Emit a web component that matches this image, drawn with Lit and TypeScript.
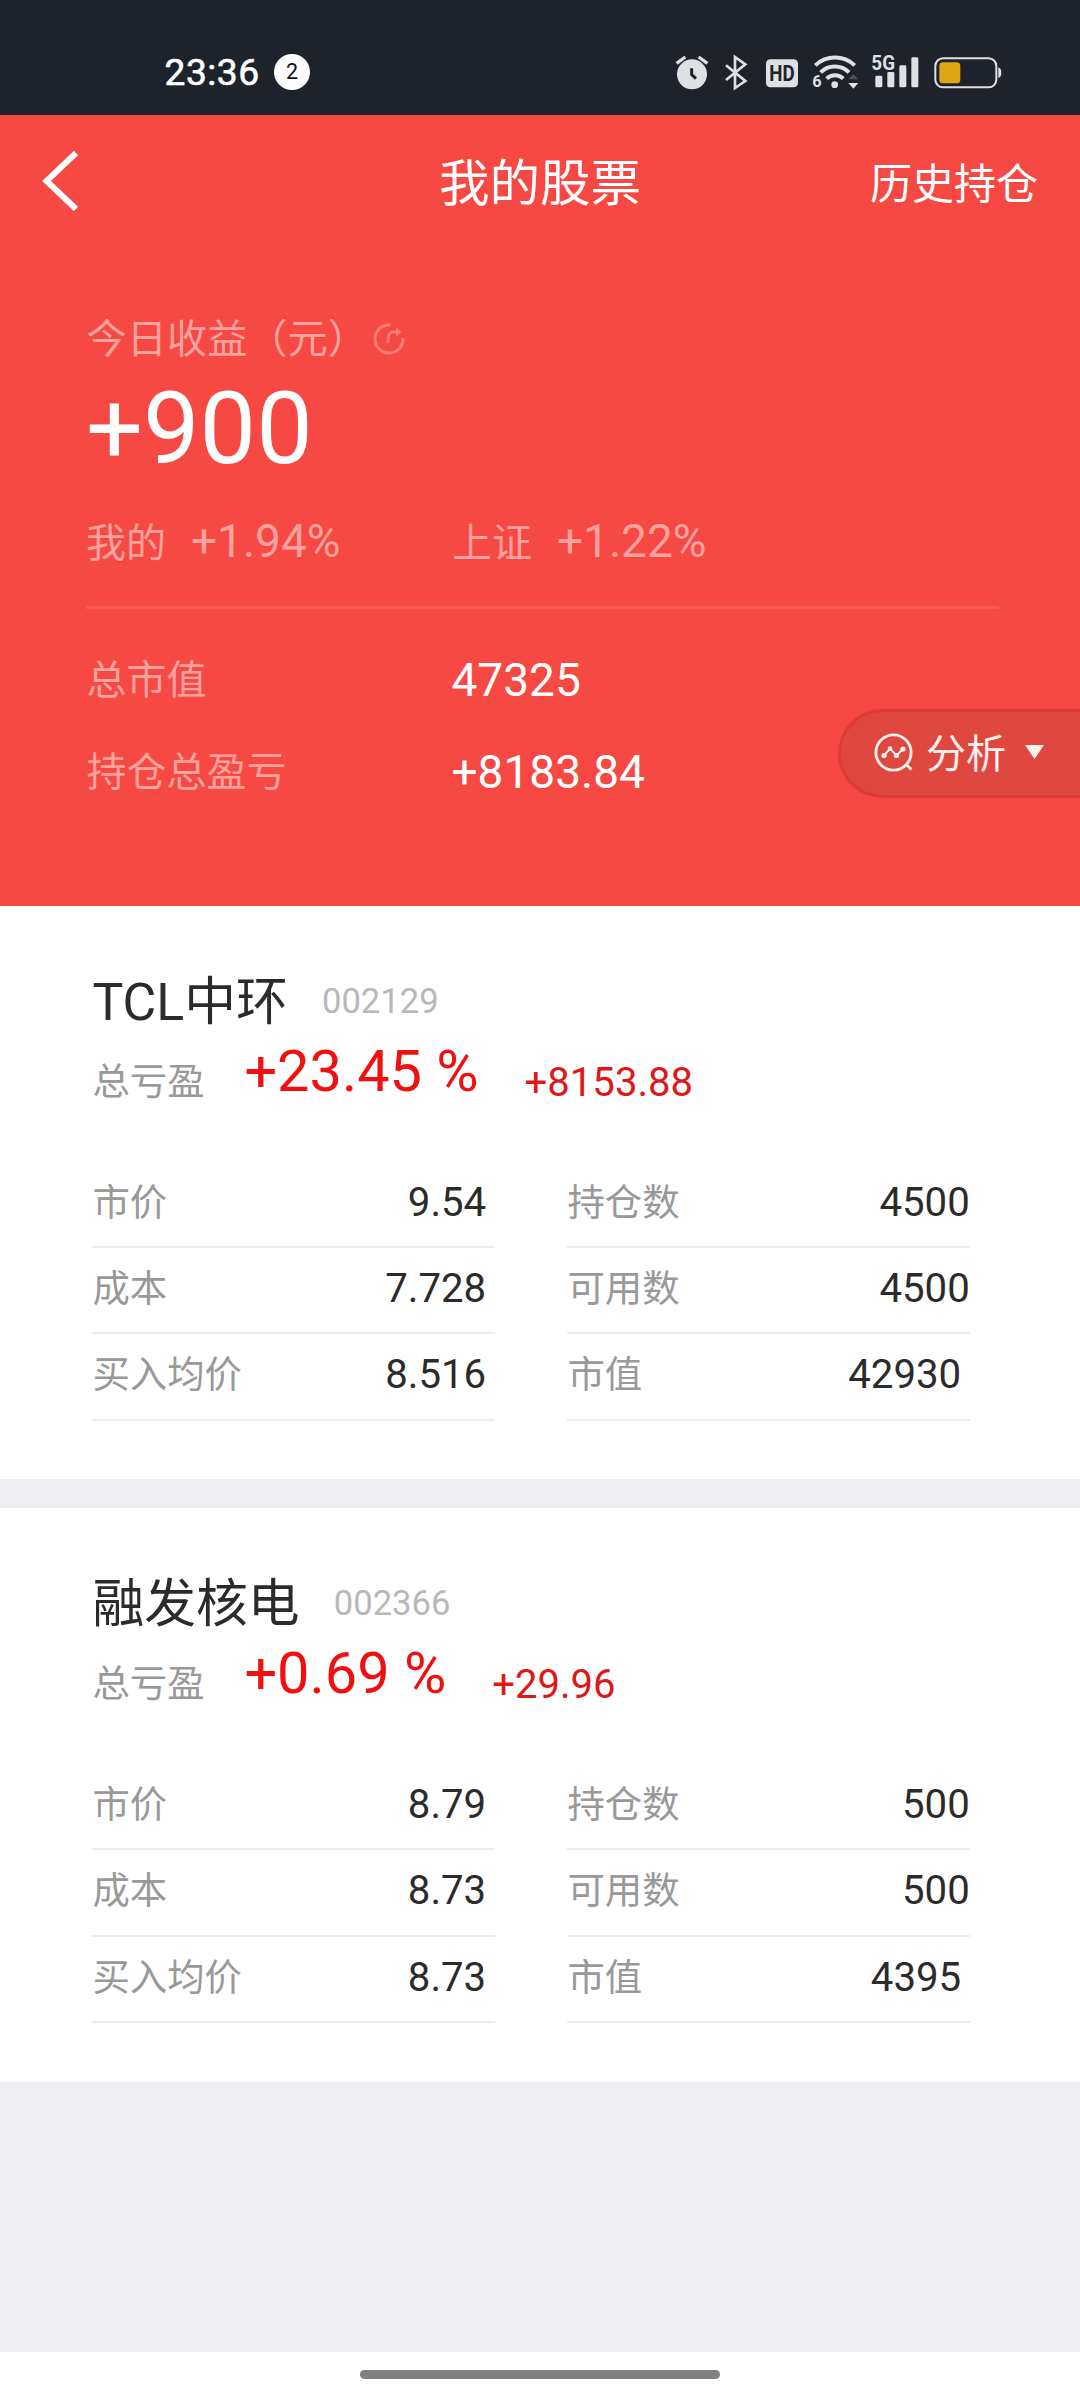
import { LitElement, html, css, svg } from "lit";
import { customElement, property } from "lit/decorators.js";

interface Cell {
  label: string;
  value: string;
}

interface Holding {
  name: string;
  code: string;
  percent: string;
  amount: string;
  left: Cell[];
  right: Cell[];
}

const HOLDINGS: Holding[] = [
  {
    name: "TCL中环",
    code: "002129",
    percent: "+23.45 %",
    amount: "+8153.88",
    left: [
      { label: "市价", value: "9.54" },
      { label: "成本", value: "7.728" },
      { label: "买入均价", value: "8.516" },
    ],
    right: [
      { label: "持仓数", value: "4500" },
      { label: "可用数", value: "4500" },
      { label: "市值", value: "42930" },
    ],
  },
  {
    name: "融发核电",
    code: "002366",
    percent: "+0.69 %",
    amount: "+29.96",
    left: [
      { label: "市价", value: "8.79" },
      { label: "成本", value: "8.73" },
      { label: "买入均价", value: "8.73" },
    ],
    right: [
      { label: "持仓数", value: "500" },
      { label: "可用数", value: "500" },
      { label: "市值", value: "4395" },
    ],
  },
];

/* Status icons share one 120-unit tall strip, three units to a pixel. */
const strip = (from: number, to: number, body: unknown) => html`<svg
  width=${(to - from) / 3}
  height="40"
  viewBox="${from} 65 ${to - from} 120"
>
  ${body}
</svg>`;

const alarm = svg`
  <circle cx="96" cy="132" r="45" fill="#dfe0e3"/>
  <path d="M50 99 L76 80 M142 99 L116 80" stroke="#dfe0e3" stroke-width="10"/>
  <path d="M95 114 V133 L108 145" fill="none" stroke="#1e222b" stroke-width="9"/>`;

const bluetooth = svg`
  <path d="M199 105 L257 152 L226 173 V80 L257 102 L199 149" fill="none" stroke="#dfe0e3" stroke-width="8"/>`;

const hd = svg`
  <rect x="318" y="87" width="96" height="84" rx="13" fill="#dfe0e3"/>
  <text x="366" y="153" text-anchor="middle" font-family="Roboto, sans-serif" font-weight="700" font-size="66" textLength="76" lengthAdjust="spacingAndGlyphs" fill="#1e222b">HD</text>`;

const wifi = svg`
  <g fill="none" stroke="#dfe0e3" stroke-width="12">
    <path d="M465 105 A86 86 0 0 1 583 105"/>
    <path d="M481 126 A60 60 0 0 1 566 126"/>
    <path d="M499 145 A36 36 0 0 1 549 145"/>
  </g>
  <circle cx="523" cy="163" r="10" fill="#dfe0e3"/>
  <text x="456" y="171" font-family="Roboto, sans-serif" font-weight="700" font-size="52" textLength="28" lengthAdjust="spacingAndGlyphs" fill="#dfe0e3">6</text>
  <path d="M579 132 L594 147 H564 Z" fill="#4a4d56"/>
  <path d="M579 175 L594 158 H564 Z" fill="#dfe0e3"/>`;

const signal = svg`
  <text x="633" y="120" font-family="Roboto, sans-serif" font-weight="700" font-size="62" textLength="71" lengthAdjust="spacingAndGlyphs" fill="#dfe0e3">5G</text>
  <g fill="#dfe0e3">
    <rect x="645" y="136" width="21" height="35" rx="4"/>
    <rect x="681" y="125" width="21" height="46" rx="4"/>
    <rect x="717" y="105" width="21" height="66" rx="4"/>
    <rect x="753" y="81" width="21" height="90" rx="4"/>
  </g>`;

const battery = svg`
  <rect x="825" y="84" width="183" height="87" rx="23" fill="none" stroke="#dfe0e3" stroke-width="6"/>
  <rect x="837" y="96" width="63" height="63" rx="11" fill="#dea517"/>
  <path d="M1014 111 Q1023 114 1023 127 Q1023 140 1014 143 Z" fill="#dfe0e3"/>`;

@customElement("holding-card")
class HoldingCard extends LitElement {
  @property({ attribute: false }) holding!: Holding;

  static styles = css`
    :host {
      display: block;
      background: #fff;
      padding: 60px 110px 58.7px 92.4px;
      font-family: Roboto, "Noto Sans CJK SC", sans-serif;
    }
    .title {
      display: flex;
      align-items: flex-start;
      gap: 34.2px;
      line-height: 70px;
      height: 71px;
    }
    .name {
      padding-top: 1.6px;
      font-size: 51.8px;
      color: #2b2b2b;
    }
    .code {
      font-size: 34.6px;
      color: #b8b8b8;
    }
    .profit {
      display: flex;
      align-items: flex-end;
      margin-top: -1px;
      line-height: 47px;
      white-space: nowrap;
    }
    .profit-label {
      width: 152px;
      font-size: 37.4px;
      color: #999;
    }
    .percent {
      margin-right: 46px;
      font-size: 57.7px;
      line-height: 70px;
      color: #f20f0f;
    }
    .amount {
      font-size: 40.1px;
      color: #e01717;
    }
    .columns {
      display: grid;
      grid-template-columns: 403px 403px;
      column-gap: 72px;
      margin-top: 55.7px;
    }
    .row {
      box-sizing: border-box;
      display: flex;
      align-items: baseline;
      justify-content: space-between;
      height: 86.3px;
      border-bottom: 2px solid #ececec;
      line-height: 82px;
    }
    .label {
      font-size: 37.4px;
      color: #999;
    }
    .value {
      font-size: 40.2px;
      color: #2b2b2b;
    }
    .column.left .value,
    .column.right .row:last-child .value {
      padding-right: 9.2px;
    }
    .column.right .value {
      padding-right: 0.6px;
    }
  `;

  private column(side: string, cells: Cell[]) {
    return html`<div class="column ${side}">
      ${cells.map(
        (c) => html`<div class="row">
          <span class="label">${c.label}</span><span class="value">${c.value}</span>
        </div>`
      )}
    </div>`;
  }

  render() {
    const h = this.holding;
    return html`
      <div class="title"><span class="name">${h.name}</span><span class="code">${h.code}</span></div>
      <div class="profit">
        <span class="profit-label">总亏盈</span><span class="percent">${h.percent}</span
        ><span class="amount">${h.amount}</span>
      </div>
      <div class="columns">${this.column("left", h.left)}${this.column("right", h.right)}</div>
    `;
  }
}

@customElement("app-root")
class AppRoot extends LitElement {
  static styles = css`
    :host {
      display: flex;
      flex-direction: column;
      width: 1080px;
      height: 2400px;
      overflow: hidden;
      background: #efeef3;
      font-family: Roboto, "Noto Sans CJK SC", sans-serif;
    }
    svg {
      display: block;
      flex: none;
    }
    .status {
      box-sizing: border-box;
      display: flex;
      align-items: center;
      height: 115px;
      padding: 28px 76.7px 0 164.5px;
      background: #1e222b;
    }
    .time {
      font-size: 37.2px;
      font-weight: 400;
      letter-spacing: 0.5px;
      -webkit-text-stroke: 0.6px #fff;
      color: #fff;
      width: 109.5px;
      line-height: 40px;
    }
    .count {
      width: 36px;
      height: 36px;
      border-radius: 50%;
      background: #fff;
      color: #111;
      font-size: 21.5px;
      line-height: 36px;
      text-align: center;
    }
    .status-icons {
      display: flex;
      margin-left: auto;
    }
    .hero {
      position: relative;
      height: 791px;
      background: #f64944;
      color: #fff;
    }
    .bar {
      display: grid;
      grid-template-columns: 1fr auto 1fr;
      align-items: center;
      height: 136px;
      padding: 0 42px;
    }
    .back {
      margin-top: -4px;
    }
    .heading {
      margin-top: -9px;
      font-size: 50.5px;
    }
    .history {
      margin-top: -6px;
      font-size: 42px;
      justify-self: end;
    }
    .summary {
      padding: 58px 81px 0 86px;
    }
    .today {
      display: flex;
      align-items: center;
      height: 60px;
      font-size: 40.2px;
      color: #ffa19e;
    }
    .today span {
      margin: -7px 0 0 0.6px;
    }
    .today svg {
      margin-left: 4.5px;
    }
    .gain {
      font-size: 100.6px;
      line-height: 120px;
    }
    .rates {
      display: grid;
      grid-template-columns: 366px auto;
      line-height: 105px;
      height: 105px;
      margin-bottom: 12px;
      color: #ffa19e;
    }
    .rate {
      display: flex;
      align-items: baseline;
      gap: 25px;
      font-size: 40px;
    }
    .rate-value {
      font-size: 46px;
    }
    .totals {
      border-top: 3px solid #f95a56;
      padding-top: 24px;
    }
    .total {
      display: grid;
      grid-template-columns: 365.5px auto;
      align-items: center;
      height: 92px;
      line-height: 88px;
    }
    .total-label {
      padding: 4px 0 0 0.5px;
      font-size: 40px;
      color: #ffa19e;
    }
    .total-value {
      padding-top: 1px;
      font-size: 46px;
    }
    .analysis {
      position: absolute;
      right: 0;
      top: 594px;
      box-sizing: border-box;
      display: flex;
      align-items: center;
      width: 242px;
      height: 89px;
      padding-left: 33px;
      border: 3px solid #db3c3b;
      border-right: 0;
      border-radius: 45px 0 0 45px;
      background: #df483f;
      color: #fff0ee;
      font-size: 40px;
    }
    .analysis svg {
      margin-top: -3px;
    }
    .analysis-text {
      margin: -6px 19px 0 13px;
    }
    .cards {
      flex: 1;
      display: flex;
      flex-direction: column;
      gap: 29px;
    }
    .nav {
      display: flex;
      justify-content: center;
      height: 48px;
      background: #fff;
    }
    .pill {
      width: 360px;
      height: 9px;
      margin-top: 18px;
      border-radius: 4.5px;
      background: #808080;
    }
  `;

  render() {
    return html`
      <div class="status">
        <span class="time">23:36</span>
        <span class="count">2</span>
        <div class="status-icons">
          ${strip(45, 190, alarm)}${strip(190, 315, bluetooth)}${strip(315, 455, hd)}${strip(455, 632, wifi)}${strip(632, 818, signal)}${strip(818, 1030, battery)}
        </div>
      </div>

      <div class="hero">
        <div class="bar">
          <svg class="back" width="37" height="60" viewBox="0 0 37 60">
            <path d="M34 2 L4.5 30 L34 58" fill="none" stroke="#fff" stroke-width="6" />
          </svg>
          <span class="heading">我的股票</span>
          <span class="history">历史持仓</span>
        </div>

        <div class="summary">
          <div class="today">
            <span>今日收益（元）</span>
            <svg width="34" height="34" viewBox="0 0 34 34" fill="none" stroke="#fb7b77" stroke-width="3">
              <path d="M17.5 3 A14 14 0 1 0 31 17" stroke-linecap="round" />
              <path d="M16 20 V17 Q16 10 22 10 H26" stroke-width="3" stroke-linecap="round" />
              <path d="M24 5.5 L29.5 10 L24 14.5 Z" fill="#fb7b77" stroke="none" />
            </svg>
          </div>
          <div class="gain">+900</div>
          <div class="rates">
            <div class="rate"><span>我的</span><span class="rate-value">+1.94%</span></div>
            <div class="rate"><span>上证</span><span class="rate-value">+1.22%</span></div>
          </div>
          <div class="totals">
            <div class="total"><span class="total-label">总市值</span><span class="total-value">47325</span></div>
            <div class="total"><span class="total-label">持仓总盈亏</span><span class="total-value">+8183.84</span></div>
          </div>
        </div>

        <div class="analysis">
          <svg width="39" height="39" viewBox="0 0 39 39" fill="none" stroke="#fff0ee" stroke-width="2.8">
            <circle cx="19.5" cy="19.5" r="17.6" />
            <path d="M31.5 31 L37.5 36.5" />
            <path d="M10 22.5 L16 15.5 L22.5 22.5 L29 16" stroke-width="2" />
            <g fill="#fff0ee" stroke="none">
              <circle cx="10" cy="22.5" r="2.6" />
              <circle cx="16" cy="15.5" r="2.2" />
              <circle cx="22.5" cy="22.5" r="2.6" />
              <circle cx="29" cy="16" r="2.6" />
            </g>
          </svg>
          <span class="analysis-text">分析</span>
          <svg width="19" height="14" viewBox="0 0 19 14"><path d="M0 0 H19 L9.5 14 Z" fill="#fff0ee" /></svg>
        </div>
      </div>

      <div class="cards">${HOLDINGS.map((h) => html`<holding-card .holding=${h}></holding-card>`)}</div>

      <div class="nav"><div class="pill"></div></div>
    `;
  }
}
